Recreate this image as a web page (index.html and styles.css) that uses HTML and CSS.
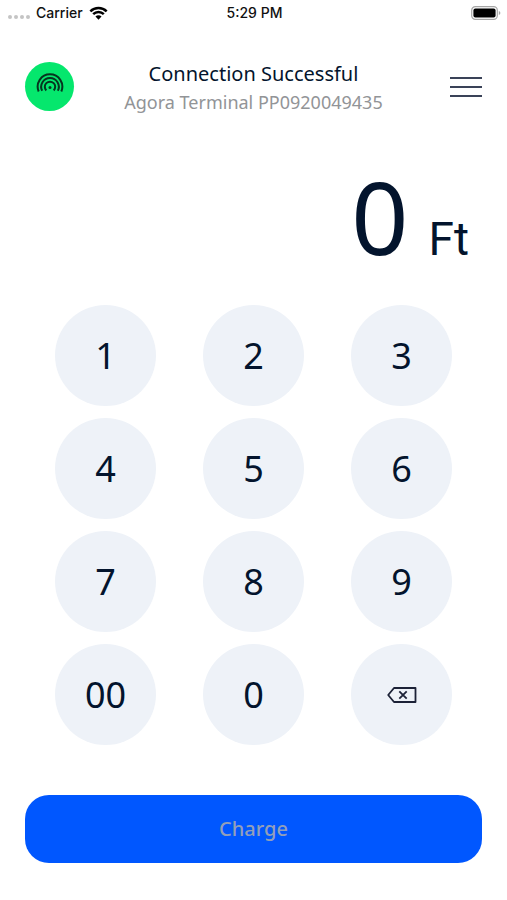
FILE: index.html
```html
<!DOCTYPE html>
<html lang="en">
<head>
<meta charset="utf-8">
<meta name="viewport" content="width=device-width, initial-scale=1">
<title>Terminal</title>
<link rel="stylesheet" href="styles.css">
</head>
<body>
<div class="status">
  <div class="carrier">
    <span class="signal"><i></i><i></i><i></i><i></i></span>
    <span>Carrier</span>
    <svg class="wifi" viewBox="0 0 20 14" aria-hidden="true">
      <path d="M1.400 5.200a12.300 12.300 0 0 1 17.200 0M4.400 8.300a8 8 0 0 1 11.200 0" fill="none" stroke="#000" stroke-width="2.600"/>
      <path d="M10 14l-3.200-3.200a4.500 4.500 0 0 1 6.400 0z"/>
    </svg>
  </div>
  <span>5:29 PM</span>
  <svg class="battery" viewBox="0 0 30 14" aria-hidden="true">
    <rect x=".7" y=".7" width="25.6" height="12.6" rx="3.6" fill="#fff" stroke="#a6a6a6" stroke-width="1.2"/>
    <rect x="2.4" y="2.4" width="22.2" height="9.2" rx="2"/>
    <path d="M27.8 5v4q1.6-.6 1.6-2t-1.6-2z" fill="#a6a6a6"/>
  </svg>
</div>

<header class="header">
  <button class="reader" aria-label="Reader status">
    <svg viewBox="0 0 28 24" aria-hidden="true">
      <g fill="none" stroke="#06351f" stroke-width="2">
        <path d="M2.700 20.500A12.300 12.300 0 1 1 25.300 20.500"/>
        <path d="M6.200 19.800A8.800 8.800 0 1 1 21.800 19.800"/>
        <path d="M10.300 19.500A5.200 5.200 0 1 1 17.700 19.500"/>
      </g>
      <circle cx="14" cy="16.500" r="1.500" fill="#06351f"/>
    </svg>
  </button>
  <div class="heading">
    <h1>Connection Successful</h1>
    <p>Agora Terminal PP0920049435</p>
  </div>
  <button class="menu" aria-label="Menu"><i></i><i></i><i></i></button>
</header>

<main>
  <div class="amount"><span class="value">0</span><span class="currency">Ft</span></div>
  <div class="keypad">
    <button>1</button><button>2</button><button>3</button>
    <button>4</button><button>5</button><button>6</button>
    <button>7</button><button>8</button><button>9</button>
    <button>00</button><button>0</button>
    <button aria-label="Delete">
      <svg viewBox="0 0 30 16" aria-hidden="true" fill="none" stroke="#1c2237" stroke-width="1.800" stroke-linejoin="round">
        <path d="M7 1h21.500v14H7L1.200 8z"/>
        <path d="M12.300 4.300l7.400 7.400m0-7.400l-7.400 7.400"/>
      </svg>
    </button>
  </div>
  <button class="charge">Charge</button>
</main>
</body>
</html>
```
FILE: styles.css
```css
* { box-sizing: border-box; }

body {
  margin: 0;
  background: #fff;
  color: #03142d;
  font-family: "Noto Sans", sans-serif;
}

button {
  border: 0;
  padding: 0;
  background: none;
  color: inherit;
  font: inherit;
  cursor: pointer;
}

svg { display: block; }

.status {
  display: grid;
  grid-template-columns: 1fr auto 1fr;
  align-items: center;
  height: 26px;
  padding: 0 6px 0 8px;
  color: #111;
  font: 500 14px/26px "Inter", sans-serif;
}

.carrier {
  display: flex;
  align-items: center;
  gap: 6px;
}

.signal {
  display: flex;
  gap: 2px;
  padding-top: 8px;
}

.signal i {
  width: 4px;
  height: 4px;
  border-radius: 50%;
  background: #c4c4c4;
}

.wifi { width: 19px; height: 14px; }

.battery {
  justify-self: end;
  width: 30px;
  height: 14px;
}

.header {
  display: flex;
  align-items: flex-start;
  justify-content: space-between;
  padding: 34px 25px 0;
}

.reader {
  display: grid;
  place-items: center;
  width: 49px;
  height: 49px;
  margin-top: 2px;
  border-radius: 50%;
  background: #05e76d;
}

.reader svg {
  width: 28px;
  height: 24px;
  margin-bottom: 8px;
}

.heading { text-align: center; }

.heading h1 {
  margin: 0;
  font-size: 20px;
  line-height: 28px;
  font-weight: 400;
}

.heading p {
  margin: 0;
  color: #929497;
  font-size: 18px;
  line-height: 28px;
}

.menu {
  display: flex;
  flex-direction: column;
  align-items: flex-end;
  justify-content: center;
  gap: 7px;
  width: 49px;
  height: 49px;
  margin-top: 2px;
}

.menu i {
  width: 32px;
  height: 2px;
  background: #3a4358;
}

.amount {
  display: flex;
  align-items: baseline;
  justify-content: flex-end;
  gap: 20px;
  padding: 40px 38px 0 25px;
  line-height: 120px;
}

.value { font-size: 100px; }

.currency {
  font-size: 46px;
  font-family: "Roboto", sans-serif;
}

.keypad {
  display: grid;
  grid-template-columns: repeat(3, 1fr);
  gap: 12px 47px;
  padding: 6px 55px 0;
}

.keypad button {
  display: grid;
  place-items: center;
  aspect-ratio: 1;
  border-radius: 50%;
  background: #eef2f8;
  font-size: 36px;
}

.keypad svg { width: 30px; height: 16px; }

.charge {
  display: block;
  width: calc(100% - 50px);
  margin: 50px 25px 36px;
  padding: 20px;
  border-radius: 24px;
  background: #0057ff;
  color: #929fb9;
  font-size: 20px;
  line-height: 28px;
  font-weight: 500;
}
```
